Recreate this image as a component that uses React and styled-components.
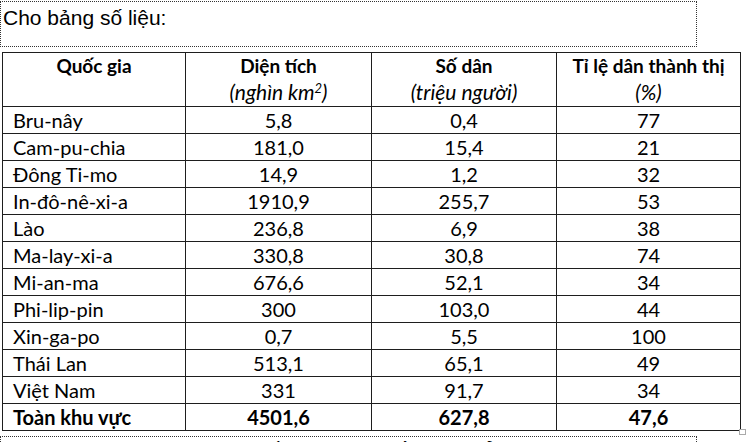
import React from 'react';
import styled, { createGlobalStyle } from 'styled-components';

const Global = createGlobalStyle`
  html, body { margin: 0; padding: 0; background: #fff; }
  body { overflow: hidden; }
`;

const Page = styled.div`
  width: 749px;
  height: 442px;
  overflow: hidden;
  box-sizing: border-box;
  padding-top: 1px;
  display: flex;
  flex-direction: column;
  gap: 5px;
`;

const TextFrame = styled.div`
  width: 697px;
  height: ${(p) => p.$h}px;
  flex: none;
  box-sizing: border-box;
  border: 1px dotted #333;
  border-bottom-style: ${(p) => (p.$open ? 'none' : 'dotted')};
  padding: ${(p) => p.$pt}px 2px 0;
  font-family: "Liberation Sans", Arial, sans-serif;
  font-size: 21px;
  color: #000;
  overflow: hidden;
  white-space: nowrap;
`;

const TableWrap = styled.div`
  position: relative;
  margin-left: 2px;
  width: 738px;
  flex: none;
`;

const Table = styled.table`
  border-collapse: collapse;
  table-layout: fixed;
  width: 738px;
  font-family: Lato, "Open Sans", sans-serif;
  font-size: 20px;
  color: #000;
`;

const Th = styled.th`
  border: 1px solid #1e1e1e;
  padding: 0;
  height: 53px;
  vertical-align: top;
  text-align: center;
  font-size: 19px;
  font-weight: 700;
  line-height: 26px;
`;

const Unit = styled.div`
  font-size: 21px;
  font-weight: 400;
  font-style: italic;
  line-height: 26px;
  sup {
    font-size: 13px;
    line-height: 0;
    vertical-align: 7px;
  }
`;

const Td = styled.td`
  border: 1px solid #1e1e1e;
  padding: ${(p) => (p.$left ? '0 0 0 10px' : '0')};
  height: 26px;
  line-height: 26px;
  text-align: ${(p) => (p.$left ? 'left' : 'center')};
  font-weight: ${(p) => (p.$bold ? 700 : 400)};
  white-space: nowrap;
`;

const Handle = styled.div`
  position: absolute;
  right: -6px;
  bottom: -4px;
  width: 5px;
  height: 4px;
  border: 1px solid #aaa;
  background: #fff;
`;

const rows = [
  ['Bru-nây', '5,8', '0,4', '77'],
  ['Cam-pu-chia', '181,0', '15,4', '21'],
  ['Đông Ti-mo', '14,9', '1,2', '32'],
  ['In-đô-nê-xi-a', '1910,9', '255,7', '53'],
  ['Lào', '236,8', '6,9', '38'],
  ['Ma-lay-xi-a', '330,8', '30,8', '74'],
  ['Mi-an-ma', '676,6', '52,1', '34'],
  ['Phi-lip-pin', '300', '103,0', '44'],
  ['Xin-ga-po', '0,7', '5,5', '100'],
  ['Thái Lan', '513,1', '65,1', '49'],
  ['Việt Nam', '331', '91,7', '34'],
];

export default function App() {
  return (
    <>
      <Global />
      <Page>
        <TextFrame $h={46} $pt={4}>Cho bảng số liệu:</TextFrame>
        <TableWrap>
          <Table>
            <colgroup>
              <col style={{ width: 183 }} />
              <col style={{ width: 186 }} />
              <col style={{ width: 185 }} />
              <col style={{ width: 184 }} />
            </colgroup>
            <thead>
              <tr>
                <Th>Quốc gia</Th>
                <Th>
                  Diện tích
                  <Unit>(nghìn km<sup>2</sup>)</Unit>
                </Th>
                <Th>
                  Số dân
                  <Unit>(triệu người)</Unit>
                </Th>
                <Th>
                  Tỉ lệ dân thành thị
                  <Unit>(%)</Unit>
                </Th>
              </tr>
            </thead>
            <tbody>
              {rows.map((r) => (
                <tr key={r[0]}>
                  <Td $left>{r[0]}</Td>
                  <Td>{r[1]}</Td>
                  <Td>{r[2]}</Td>
                  <Td>{r[3]}</Td>
                </tr>
              ))}
              <tr>
                <Td $left $bold>Toàn khu vực</Td>
                <Td $bold>4501,6</Td>
                <Td $bold>627,8</Td>
                <Td $bold>47,6</Td>
              </tr>
            </tbody>
          </Table>
          <Handle />
        </TableWrap>
        <TextFrame $h={40} $pt={1} $open>
          Nhận xét nào sau đây đúng về diện tích, số dân và tỉ lệ dân thành thị?
        </TextFrame>
      </Page>
    </>
  );
}
